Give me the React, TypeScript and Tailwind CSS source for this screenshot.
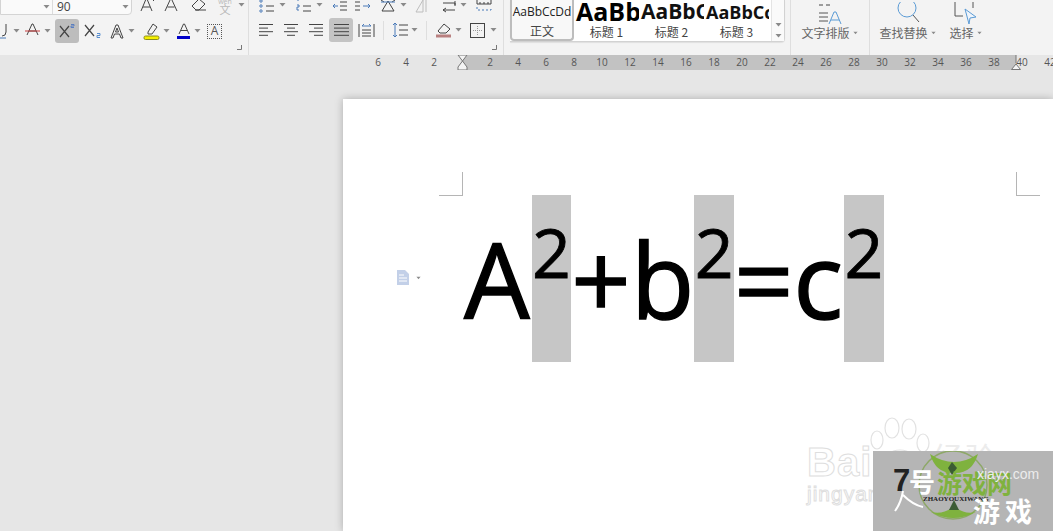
import type { ReactNode } from "react";

const rulerLeft = ["6", "4", "2", "", "2", "4", "6", "8", "10", "12", "14", "16", "18", "20", "22", "24", "26", "28", "30", "32", "34", "36", "38", "40", "42"];

// small grey dropdown triangle used all over the ribbon
const Caret = ({ className = "" }: { className?: string }) => (
  <svg width="7" height="4" viewBox="0 0 7 4" className={`shrink-0 ${className}`}>
    <path d="M0.5 0h6L3.5 3.5z" fill="#8a8a8a" />
  </svg>
);

const Icon = ({ w = 16, h = 16, className = "", children }: { w?: number; h?: number; className?: string; children: ReactNode }) => (
  <svg width={w} height={h} viewBox={`0 0 ${w} ${h}`} fill="none" stroke="#444" strokeWidth="1" className={`shrink-0 ${className}`}>
    {children}
  </svg>
);

const Lines = ({ rows }: { rows: [number, number][] }) => (
  <Icon w={15} h={14}>
    {rows.map(([a, b], i) => (
      <path key={i} d={`M${a} ${1.5 + i * 3.6}H${b}`} />
    ))}
  </Icon>
);

const Sep = () => <div className="w-px self-stretch bg-[#dedede] shrink-0" />;

const Launcher = ({ className = "" }: { className?: string }) => (
  <svg width="5" height="5" viewBox="0 0 5 5" className={className}>
    <path d="M0 4.5H4.5V0" stroke="#777" fill="none" />
  </svg>
);

const TopRowLeft = () => (
  <div className="flex items-start h-[19px]">
    <div className="w-[132px] h-[16px] -mt-px bg-[#fafafa] border border-[#d4d4d4] rounded-br-sm flex items-center shrink-0">
      <div className="w-[52px] h-full border-r border-[#dcdcdc] flex items-center justify-end pr-[2px]">
        <Caret />
      </div>
      <span className="ml-[4px] text-[12px] leading-none text-[#444]">90</span>
      <Caret className="ml-auto mr-[2px]" />
    </div>
    <Icon w={15} h={14} className="ml-[8px] -mt-[2px]">
      <path d="M1 13L6 1h1l5 12M3 9h7M12 1l2 2" />
    </Icon>
    <Icon w={14} h={14} className="ml-[9px] -mt-[2px]">
      <path d="M1 13L6.5 1h1L13 13M3.500 9h7" />
    </Icon>
    <Icon w={16} h={14} className="ml-[13px] -mt-[2px]">
      <path d="M1 8l7-7 6 5-6 6H5zM4 12h11" />
    </Icon>
    <div className="ml-[8px] w-[20px] h-[14px] -mt-[2px] flex flex-col items-center text-[#b8b8b8] leading-none">
      <span className="text-[7px]">wén</span>
      <span className="text-[11px] -mt-px font-['Noto_Sans_CJK_SC',sans-serif]">文</span>
    </div>
    <Caret className="ml-[3px] mt-[3px]" />
  </div>
);

const BottomRowLeft = () => (
  <div className="flex items-center h-[24px]">
    <Icon w={7} h={16}>
      <path d="M6 1v8a4 4 0 0 1-4 4" />
      <path d="M0 15h6" stroke="#4a7ab8" />
    </Icon>
    <Caret className="ml-[6px]" />
    <Icon w={15} h={16} className="ml-[5px]">
      <path d="M2 12L7 1h1l5 11M4 8h7" />
      <path d="M0 8h15" stroke="#c83c3c" />
    </Icon>
    <Caret className="ml-[4px]" />
    <div className="ml-[4px] w-[24px] h-[24px] rounded-[3px] bg-[#bdbdbd] flex items-center justify-center shrink-0">
      <Icon w={18} h={16}>
        <path d="M2 3l9 11M11 3L2 14" strokeWidth="1.2" />
        <path d="M13 1.500h3v1.500h-3v1.500h3" stroke="#5a7fc0" />
      </Icon>
    </div>
    <Icon w={19} h={16} className="ml-[5px]">
      <path d="M1 2l9 11M10 2L1 13" strokeWidth="1.2" />
      <path d="M13 10.500h3v2h-3v2h3" stroke="#5a8fd0" />
    </Icon>
    <Icon w={14} h={15} className="ml-[7px]">
      <path d="M1 14L6 1h2l5 13h-2L9.500 10h-5L3 14zM5.500 8h3L7 4z" />
    </Icon>
    <Caret className="ml-[4px]" />
    <Icon w={18} h={18} className="ml-[8px]">
      <path d="M5 10l5-8 4 3-5 7H5z" />
      <rect x="1" y="14" width="15" height="3.500" rx="1.500" fill="#f5f000" stroke="#8a8a20" />
    </Icon>
    <Caret className="ml-[2px]" />
    <Icon w={14} h={16} className="ml-[7px]">
      <path d="M2 11L6.500 1h1L12 11M4 7.500h6" />
      <path d="M0 14.500h13" stroke="#0000c8" strokeWidth="3" />
    </Icon>
    <Caret className="ml-[3px]" />
    <div className="ml-[6px] w-[15px] h-[15px] border border-dotted border-[#555] flex items-center justify-center text-[12px] leading-none text-[#555] shrink-0">
      A
    </div>
  </div>
);

const ParaTop = () => (
  <div className="flex items-start h-[19px] -mt-[1px]">
    <Icon w={16} h={14}>
      <circle cx="2" cy="2" r="1.200" stroke="#4a7ab8" />
      <circle cx="2" cy="7" r="1.200" stroke="#4a7ab8" />
      <circle cx="2" cy="12" r="1.200" stroke="#4a7ab8" />
      <path d="M7 7h8M7 12h8" />
    </Icon>
    <Caret className="ml-[4px] mt-[4px]" />
    <Icon w={16} h={14} className="ml-[10px]">
      <path d="M1 1h2M1 6h2v2H1v3h2" stroke="#4a7ab8" />
      <path d="M7 7h8M7 12h8" />
    </Icon>
    <Caret className="ml-[4px] mt-[4px]" />
    <Icon w={16} h={14} className="ml-[9px]">
      <path d="M8 3h7M8 7h7M8 11h7" />
      <path d="M6 7H1l2-2M1 7l2 2" stroke="#4a7ab8" />
    </Icon>
    <Icon w={17} h={14} className="ml-[7px]">
      <path d="M0 3h5M0 7h5M0 11h5" />
      <path d="M8 7h7l-2-2M15 7l-2 2" stroke="#4a7ab8" />
    </Icon>
    <Icon w={17} h={14} className="ml-[8px]">
      <path d="M2 12L8 2l6 10zM1 1l3 2M15 1l-3 2" />
      <path d="M1 3h14" stroke="#4a7ab8" />
    </Icon>
    <Caret className="ml-[3px] mt-[4px]" />
    <Icon w={16} h={14} className="ml-[8px] opacity-30">
      <path d="M1 13L8 1v12zM11 1v12" />
    </Icon>
    <Icon w={16} h={14} className="ml-[10px]">
      <path d="M2 4h12v3M14 2v4M2 11h12M2 11l3-2M2 11l3 2" />
    </Icon>
    <Caret className="ml-[3px] mt-[4px]" />
    <Icon w={16} h={12} className="ml-[9px]">
      <path d="M1 1v4h14V1M4 3v2M8 3v2M12 3v2" />
      <path d="M1 8v3h14V8" stroke="#4a7ab8" strokeDasharray="2 2" />
    </Icon>
  </div>
);

const ParaBottom = () => (
  <div className="flex items-center h-[24px]">
    <Lines rows={[[0, 14], [0, 9], [0, 14], [0, 9]]} />
    <div className="ml-[10px]">
      <Lines rows={[[0, 14], [3, 11], [0, 14], [3, 11]]} />
    </div>
    <div className="ml-[10px]">
      <Lines rows={[[0, 14], [5, 14], [0, 14], [5, 14]]} />
    </div>
    <div className="ml-[5px] w-[24px] h-[24px] rounded-[3px] bg-[#c4c4c4] flex items-center justify-center shrink-0">
      <Lines rows={[[0, 15], [0, 15], [0, 15], [0, 15]]} />
    </div>
    <Icon w={17} h={15} className="ml-[5px]">
      <path d="M1 1v13M16 1v13M4 7h9M4 10h9M4 13h9" />
      <path d="M4 3h9M4 3l2-2M13 3l-2-2" stroke="#4a7ab8" />
    </Icon>
    <div className="ml-[8px] w-px h-[19px] bg-[#dedede]" />
    <Icon w={16} h={16} className="ml-[8px]">
      <path d="M7 3h9M7 8h9M7 13h9" />
      <path d="M3 1v14M1 3l2-2 2 2M1 13l2 2 2-2" stroke="#4a7ab8" />
    </Icon>
    <Caret className="ml-[3px]" />
    <div className="ml-[8px] w-px h-[19px] bg-[#dedede]" />
    <Icon w={18} h={17} className="ml-[8px]">
      <path d="M3 9l6-7 6 5-4 4H5z" />
      <path d="M1 14h15" stroke="#b98080" strokeWidth="3" />
    </Icon>
    <Caret className="ml-[2px]" />
    <Icon w={15} h={15} className="ml-[8px]">
      <rect x="0.500" y="0.500" width="14" height="14" />
      <path d="M7.500 3v9M3 7.500h9" stroke="#999" strokeDasharray="1 1" />
    </Icon>
    <Caret className="ml-[5px]" />
  </div>
);

const StyleCell = ({ sample, label, sampleClass, cellClass }: { sample: string; label: string; sampleClass: string; cellClass: string }) => (
  <div className={`flex flex-col items-center h-[41px] overflow-hidden shrink-0 ${cellClass}`}>
    <div className={`h-[24px] w-full flex items-center overflow-hidden whitespace-nowrap ${sampleClass}`}>{sample}</div>
    <div className="font-['Noto_Sans_CJK_SC',sans-serif] text-[12px] leading-[16px] text-[#444]">{label}</div>
  </div>
);

const Gallery = () => (
  <div className="ml-[6px] h-[42px] w-[275px] flex bg-white border-b border-r border-[#d2d2d2] rounded-br-sm shrink-0 shadow-[0_1px_1px_rgba(0,0,0,0.08)]">
    <StyleCell
      sample="AaBbCcDd"
      label="正文"
      cellClass="w-[64px] bg-[#f8f8f8] border-x-2 border-b-2 border-[#bdbdbd] rounded-b-sm"
      sampleClass="justify-center text-[12px] text-[#222] font-['Open_Sans',sans-serif]"
    />
    <StyleCell
      sample="AaBb"
      label="标题 1"
      cellClass="w-[65px]"
      sampleClass="justify-start pl-[2px] text-[25px] font-bold text-black font-['Open_Sans',sans-serif]"
    />
    <StyleCell
      sample="AaBbCc"
      label="标题 2"
      cellClass="w-[65px]"
      sampleClass="justify-start pl-[2px] pr-[2px] text-[21px] font-bold text-[#111] font-['Open_Sans',sans-serif]"
    />
    <StyleCell
      sample="AaBbCcDd"
      label="标题 3"
      cellClass="w-[65px]"
      sampleClass="justify-start pl-[2px] pr-[2px] text-[18px] font-bold text-[#111] font-['Open_Sans',sans-serif]"
    />
    <div className="ml-auto w-[13px] flex flex-col items-center justify-end gap-[7px] pb-[3px] border-l border-[#e4e4e4] bg-[#fafafa]">
      <Caret />
      <Caret />
    </div>
  </div>
);

const BigTool = ({ label, width, icon, ml = "" }: { label: string; width: string; icon: ReactNode; ml?: string }) => (
  <div className={`flex flex-col items-center h-full shrink-0 ${width} ${ml}`}>
    <div className="h-[24px] flex items-end justify-center">{icon}</div>
    <div className="mt-[1px] flex items-center gap-[2px] font-['Noto_Sans_CJK_SC',sans-serif] text-[12px] leading-[16px] text-[#666]">
      {label}
      <Caret className="scale-75" />
    </div>
  </div>
);

const Ribbon = () => (
  <div className="h-[55px] shrink-0 bg-[#f3f3f3] flex overflow-hidden">
    <div className="w-[248px] relative shrink-0">
      <TopRowLeft />
      <BottomRowLeft />
      <Launcher className="absolute right-[6px] bottom-[5px]" />
    </div>
    <Sep />
    <div className="w-[254px] relative pl-[10px] shrink-0">
      <ParaTop />
      <ParaBottom />
      <Launcher className="absolute right-[6px] bottom-[5px]" />
    </div>
    <Sep />
    <Gallery />
    <div className="w-[5px] shrink-0" />
    <Sep />
    <BigTool
      label="文字排版"
      width="w-[78px]"
      icon={
        <Icon w={24} h={22} className="-mb-[1px]">
          <path d="M1 2h4M8 2h4" />
          <path d="M1 10h9M1 14h9M1 18h9" stroke="#555" />
          <path d="M11 21l5-12h2l5 12M13 17h8" stroke="#5b9bd5" />
        </Icon>
      }
    />
    <Sep />
    <BigTool
      label="查找替换"
      width="w-[72px]"
      ml="ml-[2px]"
      icon={
        <Icon w={26} h={22}>
          <circle cx="12" cy="6" r="9" stroke="#5b9bd5" />
          <path d="M18 13l6 7" stroke="#555" />
        </Icon>
      }
    />
    <BigTool
      label="选择"
      width="w-[50px]"
      ml="ml-[-3px]"
      icon={
        <Icon w={26} h={22}>
          <path d="M2 14V0M2 14h8M20 0v6" stroke="#555" />
          <path d="M12 7l11 8-6 1-1 6z" stroke="#5b9bd5" fill="#eef4fb" />
        </Icon>
      }
    />
    <div className="ml-[2px]">
      <Sep />
    </div>
    <div className="flex-1" />
  </div>
);

const Ruler = () => (
  <div className="h-[15px] shrink-0 flex relative bg-[#e6e6e6] overflow-hidden">
    <div className="absolute left-[462px] right-[37px] inset-y-0 bg-[#c2c2c2]" />
    <div className="relative flex pl-[364px] text-[10px] leading-[15px] text-[#555] font-['Open_Sans',sans-serif]">
      {rulerLeft.map((n, i) => (
        <span key={i} className="w-[28px] shrink-0 text-center">
          {n}
        </span>
      ))}
    </div>
    {/* indent markers */}
    <svg width="12" height="22" viewBox="0 0 12 22" className="absolute left-[457px] top-0">
      <path d="M1 0h9L5.500 6zM5.500 6L10 12v3H1v-3z" fill="#f4f4f4" stroke="#777" />
    </svg>
    <svg width="12" height="15" viewBox="0 0 12 15" className="absolute left-[1010px] top-0">
      <path d="M6 0v8M1.500 14.500L6 9l4.500 5.500z" fill="#f4f4f4" stroke="#777" />
    </svg>
  </div>
);

const CropMark = ({ className }: { className: string }) => <div className={`absolute w-[24px] h-[24px] border-[#b5b5b5] ${className}`} />;

const Hl = ({ className = "" }: { className?: string }) => (
  <span className={`w-[39.5px] h-[167px] bg-[#c6c6c6] shrink-0 flex justify-center text-[68px] leading-[114px] [-webkit-text-stroke:0.8px_black] ${className}`}>2</span>
);

const Big = ({ children }: { children: ReactNode }) => (
  <span className="shrink-0 text-[104px] leading-[167px] [-webkit-text-stroke:1.4px_black]">{children}</span>
);

const DocPage = () => (
  <div className="ml-[343px] mt-[29px] flex-1 bg-white relative shadow-[0_0_8px_rgba(0,0,0,0.25)]">
    <CropMark className="left-[96px] top-[73px] border-r border-b" />
    <CropMark className="left-[673px] top-[73px] border-l border-b" />
    <div className="absolute left-[53px] top-[171px] flex items-center gap-[5px]">
      <svg width="14" height="15" viewBox="0 0 14 15">
        <path d="M1 0h8l4 4v11H1z" fill="#c3d0e8" />
        <path d="M3 5h5M3 8h8M3 11h8" stroke="#fff" />
      </svg>
      <Caret className="scale-75" />
    </div>
    <div className="pt-[96px] pl-[121px] flex h-[263px] text-black font-['Open_Sans',sans-serif]">
      <Big>A</Big>
      <Hl className="ml-[2px]" />
      <Big>+</Big>
      <Big>b</Big>
      <Hl />
      <Big>=</Big>
      <Big>c</Big>
      <Hl className="ml-[1px]" />
    </div>
  </div>
);

const Watermark = () => (
  <>
    <div className="absolute left-[807px] top-[418px] font-['Liberation_Sans',sans-serif] text-white [-webkit-text-stroke:1px_#dedede] leading-none">
      <div className="text-[40px] font-bold tracking-[1px] mt-[24px]">Bai</div>
      <div className="text-[21px] mt-[1px] tracking-[1px]">jingyan</div>
    </div>
    <span className="absolute left-[933px] top-[441px] text-[30px] leading-none tracking-[2px] text-[#ececec] font-['Noto_Sans_CJK_SC',sans-serif]">经验</span>
    <svg width="64" height="56" viewBox="0 0 64 56" className="absolute left-[868px] top-[416px]" fill="#fff" stroke="#e2e2e2" strokeWidth="1.200">
      <ellipse cx="9" cy="24" rx="6" ry="9" />
      <ellipse cx="24" cy="12" rx="7" ry="10" />
      <ellipse cx="41" cy="13" rx="7" ry="10" />
      <ellipse cx="55" cy="27" rx="6" ry="9" />
      <path d="M14 50q4-16 18-16t18 16" />
    </svg>
    <div className="absolute left-[873px] top-[451px] w-[180px] h-[80px] bg-[#b5b5b5] overflow-hidden">
      <svg width="100" height="80" viewBox="0 0 100 80" className="absolute left-[33px] top-[-7px]">
        <circle cx="47" cy="41" r="34" fill="none" stroke="#8ea868" strokeWidth="1.500" />
        <path d="M24 10q24 16 48 0q-6 20-24 19q-18 1-24-19z" fill="#7fb23e" />
        <path d="M25 68q22 12 45 0q-12 3-22-6q-10 9-23 6z" fill="#7fb23e" />
        <path d="M46 18l5 6-5 7-4-7z" fill="#3c5c34" />
        <path d="M48 56l5 10h-10z" fill="#3c5c34" />
      </svg>
      <svg width="40" height="24" viewBox="0 0 40 24" className="absolute left-[14px] top-[38px]" fill="none" stroke="#fff" strokeWidth="2">
        <path d="M8 22Q14 14 16 2M16 6Q26 16 36 18" />
      </svg>
      <span className="absolute left-[20px] top-[14px] text-[31px] leading-none font-bold text-[#222] font-['Liberation_Sans',sans-serif]">7</span>
      <span className="absolute left-[36px] top-[17px] text-[26px] leading-none font-bold text-white font-['Noto_Sans_CJK_SC',sans-serif]">号</span>
      <span className="absolute left-[64px] top-[19px] text-[25px] leading-none font-bold text-[#7fb23e] font-['Noto_Sans_CJK_SC',sans-serif]">游戏网</span>
      <span className="absolute left-[104px] top-[16px] text-[14px] leading-none text-[#ececec] font-['Liberation_Sans',sans-serif]">xiayx.com</span>
      <span className="absolute left-[50px] top-[45px] text-[7px] leading-none font-bold text-[#222] font-['Liberation_Serif',serif]">ZHAOYOUXIWANG</span>
      <span className="absolute left-[100px] top-[46px] text-[27px] leading-none font-bold text-white tracking-[5px] font-['Noto_Sans_CJK_SC',sans-serif]">游戏</span>
    </div>
  </>
);

export default function App() {
  return (
    <div className="w-[1053px] h-[531px] bg-[#e6e6e6] flex flex-col overflow-hidden relative font-['Open_Sans',sans-serif]">
      <Ribbon />
      <Ruler />
      <DocPage />
      <Watermark />
    </div>
  );
}
